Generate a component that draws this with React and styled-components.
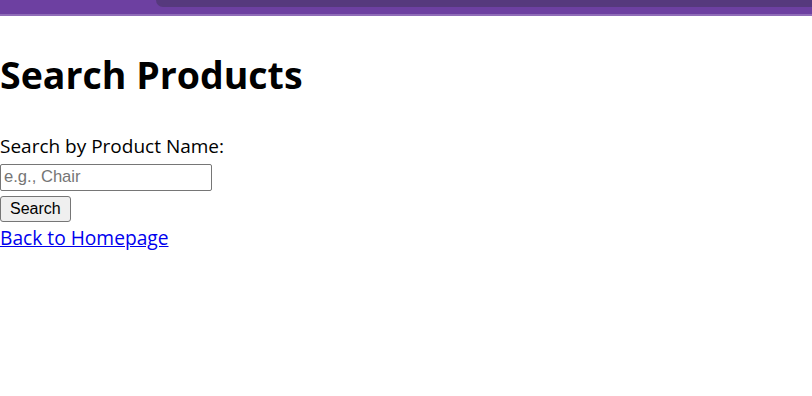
import React from "react";
import styled, { createGlobalStyle } from "styled-components";

const GlobalStyle = createGlobalStyle`
  html, body {
    margin: 0;
    padding: 0;
    background: #ffffff;
  }
  body {
    font-family: "Open Sans", "Noto Sans", sans-serif;
    color: #000000;
  }
`;

const TopBar = styled.div`
  display: flex;
  height: 14px;
  background: #6d40a1;
  border-bottom: 2px solid #8f6cb8;
`;

const TabSpacer = styled.div`
  width: 156px;
  flex-shrink: 0;
`;

const TabStrip = styled.div`
  flex: 1;
  height: 7px;
  background: #56397d;
  border-bottom-left-radius: 14px;
`;

const Page = styled.main`
  display: flex;
  flex-direction: column;
  align-items: flex-start;
`;

const Title = styled.h1`
  margin: 0;
  padding-top: 35px;
  font-size: 37.5px;
  line-height: 1.3;
  font-weight: 700;
`;

const SearchForm = styled.form`
  display: flex;
  flex-direction: column;
  align-items: flex-start;
  margin-top: 33px;
`;

const Label = styled.label`
  font-size: 19px;
  line-height: 26px;
`;

const TextInput = styled.input`
  box-sizing: border-box;
  width: 212px;
  height: 27px;
  margin: 5px 0 0;
  padding: 1px 3px;
  border: 1px solid #767676;
  border-radius: 2px;
  font-family: "Liberation Sans", Arial, sans-serif;
  font-size: 16.6px;
  color: #000000;
  &::placeholder {
    color: #757575;
  }
`;

const Button = styled.button`
  box-sizing: border-box;
  height: 26px;
  margin-top: 5.5px;
  padding: 0 9px;
  background: #efefef;
  border: 1px solid #767676;
  border-radius: 3px;
  font-family: "Liberation Sans", Arial, sans-serif;
  font-size: 16px;
  color: #000000;
`;

const HomeLink = styled.a`
  margin-top: 2.5px;
  font-size: 19.2px;
  line-height: 26px;
  color: #0000ee;
  text-decoration: underline;
`;

export default function App() {
  return (
    <>
      <GlobalStyle />
      <TopBar>
        <TabSpacer />
        <TabStrip />
      </TopBar>
      <Page>
        <Title>Search Products</Title>
        <SearchForm onSubmit={(e) => e.preventDefault()}>
          <Label htmlFor="product-name">Search by Product Name:</Label>
          <TextInput id="product-name" type="text" placeholder="e.g., Chair" />
          <Button type="submit">Search</Button>
        </SearchForm>
        <HomeLink href="#">Back to Homepage</HomeLink>
      </Page>
    </>
  );
}
